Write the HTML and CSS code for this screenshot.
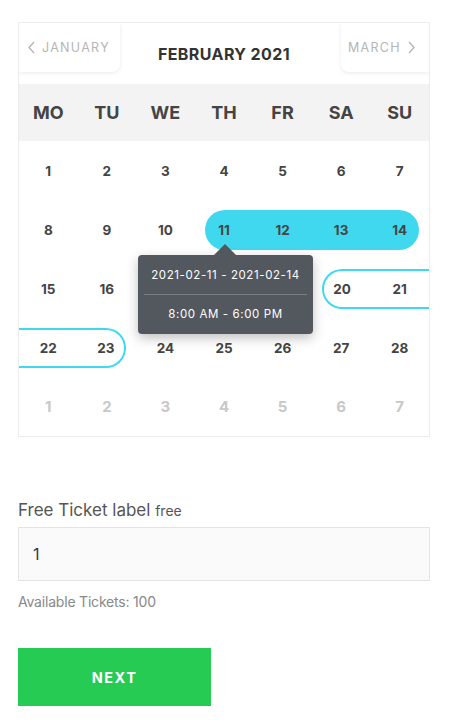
FILE: index.html
```html
<!DOCTYPE html>
<html lang="en">
<head>
    <meta charset="UTF-8">
    <meta name="viewport" content="width=device-width, initial-scale=1.0">
    <title>Book Tickets</title>
    <link rel="stylesheet" href="styles.css">
</head>
<body>
    <div class="booking">
        <div class="calendar">
            <div class="cal-head">
                <button class="nav-btn prev">
                    <svg width="9" height="13" viewBox="0 0 9 13"><path d="M7 1 L2 6.5 L7 12" fill="none" stroke="#b5b5b5" stroke-width="1.4"/></svg>
                    JANUARY
                </button>
                <div class="cal-title">FEBRUARY 2021</div>
                <button class="nav-btn next">
                    MARCH
                    <svg width="9" height="13" viewBox="0 0 9 13"><path d="M2 1 L7 6.5 L2 12" fill="none" stroke="#b5b5b5" stroke-width="1.4"/></svg>
                </button>
            </div>

            <div class="weekdays">
                <div>MO</div><div>TU</div><div>WE</div><div>TH</div><div>FR</div><div>SA</div><div>SU</div>
            </div>

            <div class="days">
                <div class="day"><span>1</span></div>
                <div class="day"><span>2</span></div>
                <div class="day"><span>3</span></div>
                <div class="day"><span>4</span></div>
                <div class="day"><span>5</span></div>
                <div class="day"><span>6</span></div>
                <div class="day"><span>7</span></div>

                <div class="day"><span>8</span></div>
                <div class="day"><span>9</span></div>
                <div class="day"><span>10</span></div>
                <div class="day filled start"><span>11</span></div>
                <div class="day filled"><span>12</span></div>
                <div class="day filled"><span>13</span></div>
                <div class="day filled end"><span>14</span></div>

                <div class="day"><span>15</span></div>
                <div class="day"><span>16</span></div>
                <div class="day"><span>17</span></div>
                <div class="day"><span>18</span></div>
                <div class="day"><span>19</span></div>
                <div class="day outline start"><span>20</span></div>
                <div class="day outline"><span>21</span></div>

                <div class="day outline"><span>22</span></div>
                <div class="day outline end"><span>23</span></div>
                <div class="day"><span>24</span></div>
                <div class="day"><span>25</span></div>
                <div class="day"><span>26</span></div>
                <div class="day"><span>27</span></div>
                <div class="day"><span>28</span></div>

                <div class="day muted"><span>1</span></div>
                <div class="day muted"><span>2</span></div>
                <div class="day muted"><span>3</span></div>
                <div class="day muted"><span>4</span></div>
                <div class="day muted"><span>5</span></div>
                <div class="day muted"><span>6</span></div>
                <div class="day muted"><span>7</span></div>
            </div>

            <div class="tooltip">
                <div class="tip-row">2021-02-11 - 2021-02-14</div>
                <div class="tip-row">8:00 AM - 6:00 PM</div>
            </div>
        </div>

        <div class="ticket">
            <label class="ticket-label" for="qty">Free Ticket label <small>free</small></label>
            <input type="text" id="qty" class="ticket-input" value="1">
            <div class="ticket-note">Available Tickets: 100</div>
        </div>

        <button class="next-btn">NEXT</button>
    </div>
</body>
</html>
```

FILE: styles.css
```css
body {
    margin: 0;
    padding: 0;
    background: #fff;
    font-family: Inter, 'DejaVu Sans', sans-serif;
    color: #444;
}

.booking {
    padding: 22px 23px 20px 18px;
}

.calendar {
    position: relative;
    border: 1px solid #ececec;
    overflow: hidden;
}

.cal-head {
    display: grid;
    grid-template-columns: 1fr auto 1fr;
    align-items: start;
    height: 61px;
}

.nav-btn {
    display: flex;
    align-items: center;
    gap: 6px;
    height: 49px;
    padding: 0 10px;
    border: none;
    background: #fff;
    font-family: inherit;
    font-size: 12.5px;
    letter-spacing: 1.3px;
    color: #b5b5b5;
    box-shadow: 0 1px 4px rgba(0, 0, 0, 0.09);
}

.nav-btn.prev {
    width: 101px;
    padding-left: 8px;
    border-radius: 0 0 8px 0;
}

.nav-btn.next {
    justify-self: end;
    width: 88px;
    padding-left: 7px;
    border-radius: 0 0 0 8px;
}

.cal-title {
    margin-top: 21px;
    font-size: 16px;
    font-weight: 700;
    color: #333;
    letter-spacing: 0.4px;
}

.weekdays {
    display: grid;
    grid-template-columns: repeat(7, 1fr);
    height: 57px;
    align-items: center;
    background: #f3f3f3;
    text-align: center;
    font-size: 18px;
    font-weight: 700;
    color: #444;
}

.days {
    display: grid;
    grid-template-columns: repeat(7, 1fr);
    grid-auto-rows: 59px;
}

.day {
    display: flex;
    align-items: center;
}

.day span {
    flex: 1;
    height: 40px;
    line-height: 40px;
    text-align: center;
    font-size: 13.5px;
    font-weight: 700;
    color: #444;
    box-sizing: border-box;
}

.day.muted span {
    color: #c8c8c8;
    font-size: 15px;
}

.day.filled span {
    background: #40d8ef;
}

.day.outline span {
    border-top: 2px solid #40d8ef;
    border-bottom: 2px solid #40d8ef;
    line-height: 36px;
}

.day.start span {
    margin-left: 10px;
    padding-right: 10px;
    border-radius: 20px 0 0 20px;
}

.day.end span {
    margin-right: 10px;
    padding-left: 10px;
    border-radius: 0 20px 20px 0;
}

.day.outline.start span {
    border-left: 2px solid #40d8ef;
}

.day.outline.end span {
    border-right: 2px solid #40d8ef;
}

.tooltip {
    position: absolute;
    left: 119px;
    top: 232px;
    width: 175px;
    padding: 0 6px;
    box-sizing: border-box;
    background: #53575e;
    border-radius: 4px;
    box-shadow: 0 4px 12px rgba(0, 0, 0, 0.25);
    color: #fff;
    font-size: 11.5px;
    letter-spacing: 0.6px;
    text-align: center;
}

.tooltip::before {
    content: "";
    position: absolute;
    top: -11px;
    left: 76px;
    border-left: 11px solid transparent;
    border-right: 11px solid transparent;
    border-bottom: 11px solid #53575e;
}

.tip-row {
    height: 39px;
    line-height: 40px;
}

.tip-row + .tip-row {
    border-top: 1px solid #7a7e84;
    line-height: 38px;
}

.ticket {
    margin-top: 63px;
}

.ticket-label {
    display: block;
    font-size: 17px;
    color: #555;
    margin-bottom: 7px;
}

.ticket-label small {
    font-size: 14px;
}

.ticket-input {
    display: block;
    width: 100%;
    height: 54px;
    box-sizing: border-box;
    padding: 0 14px;
    border: 1px solid #e3e3e3;
    background: #fafafa;
    font-family: inherit;
    font-size: 16px;
    color: #2b3a4a;
}

.ticket-note {
    margin-top: 12px;
    font-size: 14px;
    color: #888;
    letter-spacing: -0.2px;
}

.next-btn {
    margin-top: 38px;
    width: 193px;
    height: 58px;
    border: none;
    background: #25cb53;
    color: #fff;
    font-family: inherit;
    font-size: 14.5px;
    font-weight: 700;
    letter-spacing: 1.5px;
    cursor: pointer;
}
```
